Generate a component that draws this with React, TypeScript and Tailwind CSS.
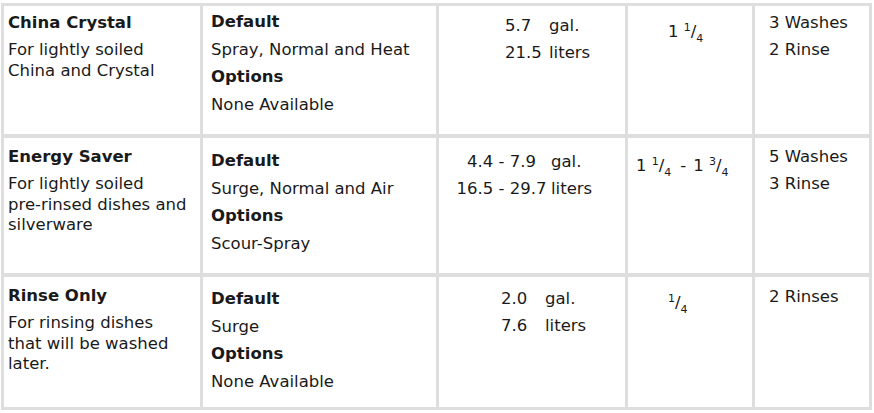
import React from 'react';

type Cycle = {
  name: string;
  desc: string[];
  namePt: string;
  defaults: string;
  options: string;
  col2Pt: string;
  water: { pt: string; pl: string; numW: string; center?: boolean; rows: [string, string][] };
  soap: React.ReactNode;
  soapPt: string;
  soapPl: string;
  cycles: string[];
  cyclesPt: string;
};

const Frac = ({ n, d }: { n: string; d: string }) => (
  <span>
    <span className="text-[11px] align-[6px]">{n}</span>/<span className="text-[11px] align-[-5px]">{d}</span>
  </span>
);

const rows: Cycle[] = [
  {
    name: 'China Crystal',
    desc: ['For lightly soiled', 'China and Crystal'],
    namePt: 'pt-[7px]',
    defaults: 'Spray, Normal and Heat',
    options: 'None Available',
    col2Pt: 'pt-[2px]',
    water: { pt: 'pt-[6px]', pl: 'pl-[66px]', numW: 'w-[44px]', rows: [['5.7', 'gal.'], ['21.5', 'liters']] },
    soap: <>1 <Frac n="1" d="4" /></>,
    soapPt: 'pt-[8px]',
    soapPl: 'pl-[40px]',
    cycles: ['3 Washes', '2 Rinse'],
    cyclesPt: 'pt-[3px]',
  },
  {
    name: 'Energy Saver',
    desc: ['For lightly soiled', 'pre-rinsed dishes and', 'silverware'],
    namePt: 'pt-[9px]',
    defaults: 'Surge, Normal and Air',
    options: 'Scour-Spray',
    col2Pt: 'pt-[9px]',
    water: {
      pt: 'pt-[10px]',
      pl: 'pl-[13px]',
      numW: 'w-[99px]',
      center: true,
      rows: [['4.4 - 7.9', 'gal.'], ['16.5 - 29.7', 'liters']],
    },
    soap: (
      <>
        1 <Frac n="1" d="4" />
        <span className="ml-[9px] mr-[7px]">-</span>1 <Frac n="3" d="4" />
      </>
    ),
    soapPt: 'pt-[10px]',
    soapPl: 'pl-[8px]',
    cycles: ['5 Washes', '3 Rinse'],
    cyclesPt: 'pt-[5px]',
  },
  {
    name: 'Rinse Only',
    desc: ['For rinsing dishes', 'that will be washed', 'later.'],
    namePt: 'pt-[9px]',
    defaults: 'Surge',
    options: 'None Available',
    col2Pt: 'pt-[8px]',
    water: { pt: 'pt-[8px]', pl: 'pl-[62px]', numW: 'w-[44px]', rows: [['2.0', 'gal.'], ['7.6', 'liters']] },
    soap: <Frac n="1" d="4" />,
    soapPt: 'pt-[8px]',
    soapPl: 'pl-[40px]',
    cycles: ['2 Rinses'],
    cyclesPt: 'pt-[6px]',
  },
];

export default function App() {
  return (
    <div className="min-h-screen bg-white pt-[3px] pl-px text-[16.5px] text-[#1a1a1a]" style={{ fontFamily: '"DejaVu Sans", Verdana, sans-serif' }}>
      <div className="grid w-[871px] grid-cols-[196px_233px_186px_124px_114px] grid-rows-[128px_135px_130px] gap-x-[3px] gap-y-[4px] bg-[#dedede] p-[3px]">
        {rows.map((r) => (
          <React.Fragment key={r.name}>
            {/* cycle name */}
            <div className={`bg-white pl-[4px] ${r.namePt}`}>
              <div className="font-bold leading-[20px]">{r.name}</div>
              <div className="mt-[7px] leading-[20.5px]">
                {r.desc.map((d) => (
                  <div key={d}>{d}</div>
                ))}
              </div>
            </div>

            {/* default / options */}
            <div className={`bg-white pl-[8px] leading-[27.6px] ${r.col2Pt}`}>
              <div className="font-bold">Default</div>
              <div>{r.defaults}</div>
              <div className="font-bold">Options</div>
              <div>{r.options}</div>
            </div>

            {/* water */}
            <div className={`bg-white leading-[27.3px] ${r.water.pt} ${r.water.pl}`}>
              {r.water.rows.map(([num, unit]) => (
                <div key={unit} className="flex">
                  <span className={`${r.water.numW} ${r.water.center ? 'text-center' : ''}`}>{num}</span>
                  <span>{unit}</span>
                </div>
              ))}
            </div>

            {/* detergent */}
            <div className={`bg-white leading-[27.3px] whitespace-pre ${r.soapPt} ${r.soapPl}`}>{r.soap}</div>

            {/* washes */}
            <div className={`bg-white pl-[14px] leading-[27.3px] ${r.cyclesPt}`}>
              {r.cycles.map((c) => (
                <div key={c}>{c}</div>
              ))}
            </div>
          </React.Fragment>
        ))}
      </div>
    </div>
  );
}
